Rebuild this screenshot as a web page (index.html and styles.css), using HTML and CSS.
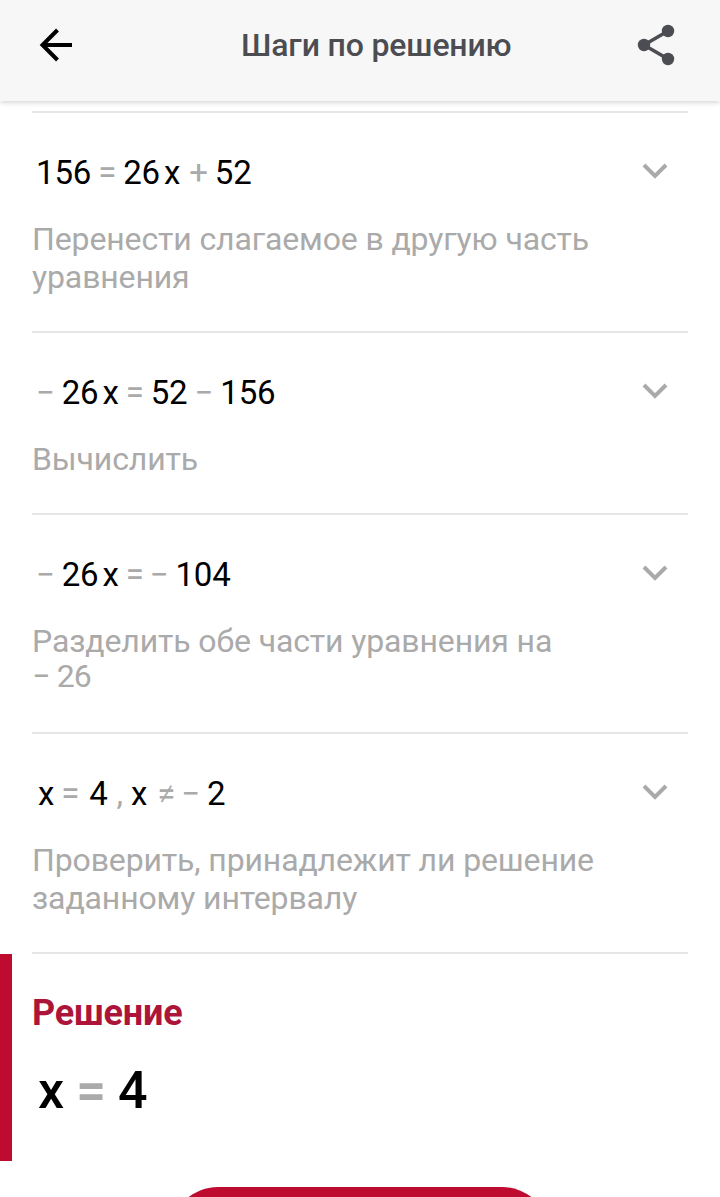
FILE: index.html
```
<!DOCTYPE html>
<html lang="ru">
<head>
	<meta charset="UTF-8">
	<title>Шаги по решению</title>
	<link rel="stylesheet" href="styles.css">
</head>
<body>

	<div class="page">
		<header class="header">
			<svg class="back" width="34" height="34" viewBox="0 0 34 34">
				<path d="M33 17H4M18.500 2L3.500 17l15 15" fill="none" stroke="#000" stroke-width="4"/>
			</svg>
			<h1>Шаги по решению</h1>
			<svg class="share" width="38" height="42" viewBox="0 0 38 42">
				<path d="M31 7L7 21l24 14" fill="none" stroke="#4c4d52" stroke-width="3.500"/>
				<circle cx="31" cy="7" r="6.200" fill="#4c4d52"/>
				<circle cx="7" cy="21" r="6.200" fill="#4c4d52"/>
				<circle cx="31" cy="35" r="6.200" fill="#4c4d52"/>
			</svg>
		</header>

		<main class="steps">
			<section class="step">
				<div class="row">
					<div class="math"><span>156</span><i class="op">=</i><span>26</span><b class="var">x</b><i class="op plus">+</i><span>52</span></div>
					<svg class="arrow" width="26" height="16" viewBox="0 0 26 16"><path d="M2 2l11 11L24 2"/></svg>
				</div>
				<p>Перенести слагаемое в другую часть уравнения</p>
			</section>

			<section class="step">
				<div class="row">
					<div class="math"><i class="op sign">−</i><span>26</span><b class="var">x</b><i class="op">=</i><span>52</span><i class="op">−</i><span>156</span></div>
					<svg class="arrow" width="26" height="16" viewBox="0 0 26 16"><path d="M2 2l11 11L24 2"/></svg>
				</div>
				<p>Вычислить</p>
			</section>

			<section class="step">
				<div class="row">
					<div class="math"><i class="op sign">−</i><span>26</span><b class="var">x</b><i class="op">=</i><i class="op minus">−</i><span>104</span></div>
					<svg class="arrow" width="26" height="16" viewBox="0 0 26 16"><path d="M2 2l11 11L24 2"/></svg>
				</div>
				<p>Разделить обе части уравнения на <span class="inline-math"><i>−</i> 26</span></p>
			</section>

			<section class="step">
				<div class="row">
					<div class="math"><b class="var first">x</b><i class="op wide">=</i><span>4</span><i class="comma">,</i><b class="var">x</b><i class="op not-equal">≠</i><i class="op minus">−</i><span>2</span></div>
					<svg class="arrow" width="26" height="16" viewBox="0 0 26 16"><path d="M2 2l11 11L24 2"/></svg>
				</div>
				<p>Проверить, принадлежит ли решение заданному интервалу</p>
			</section>
		</main>

		<section class="solution">
			<h2>Решение</h2>
			<div class="answer"><span>x</span><i>=</i><span>4</span></div>
		</section>

		<button type="button" class="more" aria-label="Далее"></button>
	</div>

</body>
</html>
```
FILE: styles.css
```
* {
	box-sizing: border-box;
}
body {
	margin: 0;
	font-family: Roboto, sans-serif;
	background-color: #fff;
}
.page {
	height: 1197px;
	overflow: hidden;
}
.header {
	padding: 0 45px 11px 39px;
	display: flex;
	align-items: center;
	height: 101px;
	background-color: #f7f7f7;
	box-shadow: 0 1px 6px rgba(0, 0, 0, .2);
}
.share {
	margin-left: auto;
}
h1 {
	margin: 0 0 0 168px;
	font-size: 32px;
	letter-spacing: -.15px;
	font-weight: 500;
	color: #4c4d52;
}
.steps {
	margin: 0 32px;
	padding-top: 10px;
	border-bottom: 2px solid #e6e6e6;
}
.step {
	padding-top: 39px;
	height: 220px;
	border-top: 2px solid #e6e6e6;
}
.step:nth-child(2) {
	height: 182px;
}
.step:nth-child(3) {
	height: 219px;
}
.row {
	display: flex;
	justify-content: space-between;
	height: 68px;
}
.math {
	padding-left: 4px;
	display: flex;
	align-items: baseline;
	font-size: 33px;
	line-height: 42px;
	letter-spacing: -.15px;
	color: #000;
}
.math i,
.answer i,
.inline-math i {
	font-style: normal;
}
.op {
	margin: 0 7px;
	color: #aaa;
}
.var {
	margin-left: 4px;
	font-weight: 400;
}
.first {
	margin-left: 2px;
}
.wide {
	margin-right: 10px;
}
.plus {
	margin-left: 9px;
}
.not-equal {
	margin-left: 10px;
}
.sign {
	margin-left: 0;
}
.minus {
	margin-left: -1px;
}
.comma {
	margin: 0 4px 0 9px;
	color: #aaa;
}
.arrow {
	margin: 11px 20px 0 0;
}
.arrow path {
	fill: none;
	stroke: #aaa;
	stroke-width: 4;
}
p {
	margin: 0;
	width: 580px;
	font-size: 32px;
	line-height: 38px;
	letter-spacing: -.13px;
	color: #aaa;
}
.inline-math {
	display: block;
	line-height: 33px;
	letter-spacing: -.8px;
}
.solution {
	padding: 40px 0 0 20px;
	height: 207px;
	border-left: 12px solid #be0c31;
}
h2 {
	margin: 0;
	font-size: 36px;
	line-height: 38px;
	letter-spacing: -.2px;
	font-weight: 700;
	color: #ac1439;
}
.answer {
	padding: 29px 0 0 6px;
	display: flex;
	align-items: baseline;
	font-size: 52px;
	line-height: 60px;
	font-weight: 500;
}
.answer i {
	margin: 0 12px;
	font-weight: 700;
	color: #aaa;
}
.more {
	margin: 26px 0 0 170px;
	display: block;
	width: 380px;
	height: 96px;
	border: none;
	border-radius: 48px;
	background-color: #be0c31;
}
```
